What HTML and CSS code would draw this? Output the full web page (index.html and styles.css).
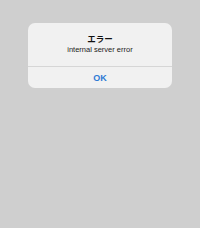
FILE: index.html
```html
<!DOCTYPE html>
<html lang="ja">
<head>
    <meta charset="UTF-8">
    <meta name="viewport" content="width=device-width, initial-scale=1.0">
    <title>エラー</title>
    <link rel="stylesheet" href="styles.css">
</head>
<body>

    <!-- アラート -->
    <div class="alert">
        <div class="alert-body">
            <p class="alert-title">エラー</p>
            <p class="alert-message">internal server error</p>
        </div>
        <button class="alert-button">OK</button>
    </div>

</body>
</html>
```

FILE: styles.css
```css
html, body {
    height: 100%;
}
body {
    margin: 0;
    background: #cfcfcf;
    font-family: "Liberation Sans", "Noto Sans CJK JP", sans-serif;
}
.alert {
    width: 144px;
    margin: 23px auto 0;
    background: #f1f1f1;
    border-radius: 7px;
    overflow: hidden;
}
.alert-body {
    padding: 9px 8px 11px;
    text-align: center;
}
.alert-title {
    margin: 0;
    font-family: "Noto Sans CJK JP", sans-serif;
    font-size: 8.5px;
    font-weight: bold;
    line-height: 12px;
    color: #111;
}
.alert-message {
    margin: 1px 0 0;
    font-size: 7.5px;
    line-height: 10px;
    color: #222;
}
.alert-button {
    display: block;
    width: 100%;
    height: 22px;
    padding: 0;
    border: none;
    border-top: 1px solid #d6d6d6;
    background: none;
    font-family: "Liberation Sans", sans-serif;
    font-size: 9px;
    font-weight: bold;
    color: #2e7ad5;
    cursor: pointer;
}
```
